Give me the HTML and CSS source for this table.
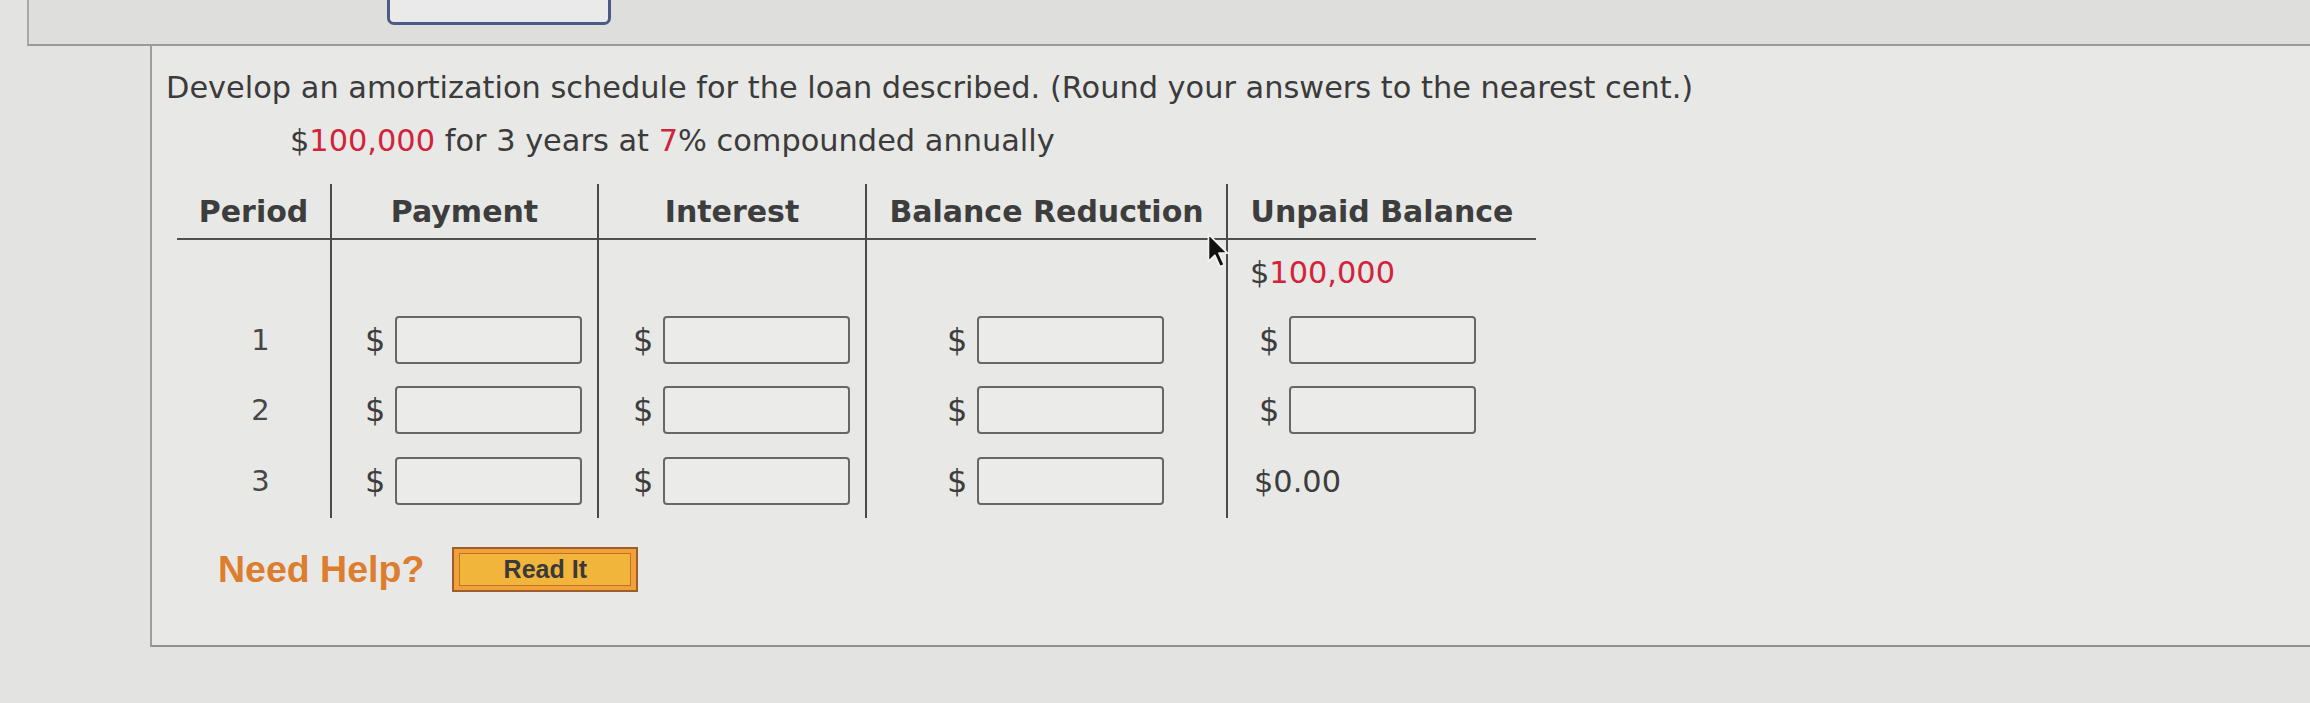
FILE: index.html
```html
<!DOCTYPE html>
<html>
<head>
<meta charset="utf-8">
<link rel="stylesheet" href="styles.css">
</head>
<body>
<div class="topbar"><div class="topbox"></div></div>
<div class="panel">
  <p class="q">Develop an amortization schedule for the loan described. (Round your answers to the nearest cent.)</p>
  <p class="given">$<span class="red">100,000</span> for 3 years at <span class="red">7</span>% compounded annually</p>
  <div class="sched">
    <div class="hd c-period">Period</div>
    <div class="hd sep">Payment</div>
    <div class="hd sep">Interest</div>
    <div class="hd sep">Balance Reduction</div>
    <div class="hd sep">Unpaid Balance</div>

    <div class="cell c-period"></div>
    <div class="cell sep"></div>
    <div class="cell sep"></div>
    <div class="cell sep"></div>
    <div class="cell sep c-ub">$<span class="red">100,000</span></div>

    <div class="cell c-period r1 num">1</div>
    <div class="cell sep c-pay r1"><span class="cur">$</span><span class="box"></span></div>
    <div class="cell sep c-int r1"><span class="cur">$</span><span class="box"></span></div>
    <div class="cell sep c-br r1"><span class="cur">$</span><span class="box"></span></div>
    <div class="cell sep c-ub r1"><span class="cur">$</span><span class="box"></span></div>

    <div class="cell c-period r2 num">2</div>
    <div class="cell sep c-pay r2"><span class="cur">$</span><span class="box"></span></div>
    <div class="cell sep c-int r2"><span class="cur">$</span><span class="box"></span></div>
    <div class="cell sep c-br r2"><span class="cur">$</span><span class="box"></span></div>
    <div class="cell sep c-ub r2"><span class="cur">$</span><span class="box"></span></div>

    <div class="cell c-period r3 num">3</div>
    <div class="cell sep c-pay r3"><span class="cur">$</span><span class="box"></span></div>
    <div class="cell sep c-int r3"><span class="cur">$</span><span class="box"></span></div>
    <div class="cell sep c-br r3"><span class="cur">$</span><span class="box"></span></div>
    <div class="cell sep c-ub r3 last">$0.00</div>
  </div>
  <div class="help">
    <span class="need">Need Help?</span>
    <button class="read"><span class="read-in">Read It</span></button>
  </div>
  <svg class="pointer" width="26" height="38" viewBox="0 0 24 36">
    <path d="M2 2 L2 28 L8 22 L13 33 L17 31 L12 20 L20 20 Z" fill="#111" stroke="#f2f2f2" stroke-width="1.6" stroke-linejoin="round"/>
  </svg>
</div>
</body>
</html>
```

FILE: styles.css
```css
html, body {
  margin: 0;
  padding: 0;
}
body {
  width: 2310px;
  height: 703px;
  overflow: hidden;
  background: #e3e3e1;
  font-family: "DejaVu Sans", Verdana, sans-serif;
  color: #3b3b3b;
}
.topbar {
  margin-left: 27px;
  height: 44px;
  background: #dededc;
  border-left: 2px solid #a9a9a7;
  border-bottom: 2px solid #9a9a98;
}
.topbox {
  margin-left: 358px;
  width: 218px;
  height: 22px;
  border: 3px solid #4b5b86;
  border-top: none;
  border-radius: 0 0 7px 7px;
  background: #eaeaea;
}
.panel {
  position: relative;
  margin-left: 150px;
  background: #e8e8e6;
  border-left: 2px solid #9d9d9b;
  border-bottom: 2px solid #8f8f8d;
  padding: 22px 0 53px 0;
}
.q {
  margin: 0 0 0 14px;
  font-size: 30.4px;
  line-height: 40px;
  white-space: nowrap;
}
.given {
  margin: 13px 0 0 138px;
  font-size: 30.4px;
  line-height: 40px;
  white-space: nowrap;
}
.red {
  color: #d3233b;
}
.sched {
  margin: 23px 0 0 25px;
  display: grid;
  grid-template-columns: 153px 267px 268px 361px 310px;
  grid-template-rows: 56px 66px 70px 70px 72px;
  width: 1359px;
}
.hd {
  display: flex;
  align-items: center;
  justify-content: center;
  font-weight: bold;
  font-size: 30px;
  color: #3d3d3d;
  border-bottom: 2px solid #4f4f4f;
  white-space: nowrap;
}
.sep {
  border-left: 2px solid #4a4a4a;
}
.cell {
  display: flex;
  align-items: center;
  font-size: 30.4px;
  color: #3d3d3d;
  padding-bottom: 2px;
}
.c-period {
  justify-content: center;
}
.num {
  font-size: 29px;
  color: #474747;
  padding-left: 14px;
}
.c-pay { padding-left: 33px; }
.c-int { padding-left: 34px; }
.c-br { padding-left: 80px; }
.c-ub { padding-left: 22px; }
.c-ub.r1, .c-ub.r2 { padding-left: 31px; }
.last { padding-left: 26px; }
.cur {
  display: inline-block;
  width: 20px;
  font-size: 32px;
}
.box {
  display: inline-block;
  margin-left: 10px;
  width: 183px;
  height: 44px;
  border: 2px solid #676767;
  border-radius: 4px;
  background: #ebebe9;
}
.help {
  margin: 28px 0 0 66px;
  display: flex;
  align-items: center;
  gap: 28px;
  height: 46px;
}
.need {
  font-family: "Liberation Sans", Arial, sans-serif;
  font-weight: bold;
  font-size: 37.5px;
  color: #dd7d2e;
}
.read {
  width: 186px;
  height: 45px;
  padding: 4px 5px;
  border: 2px solid #9c5e2c;
  background: #f0a13a;
  display: flex;
  align-items: stretch;
  cursor: pointer;
}
.read-in {
  flex: 1;
  display: flex;
  align-items: center;
  justify-content: center;
  border: 1px solid #c27226;
  background: #f2b53c;
  font-family: "Liberation Sans", Arial, sans-serif;
  font-weight: bold;
  font-size: 25px;
  color: #3a3a3a;
}
.pointer {
  position: absolute;
  left: 1054px;
  top: 186px;
}
```
